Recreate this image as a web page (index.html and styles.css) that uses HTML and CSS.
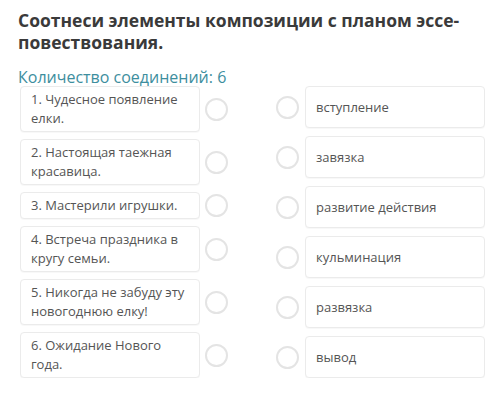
FILE: index.html
```html
<!DOCTYPE html>
<html lang="ru">
<head>
    <meta charset="UTF-8">
    <title>Соотнеси элементы</title>
    <link rel="stylesheet" href="styles.css">
</head>
<body>

<div class="task">
    <h1>Соотнеси элементы композиции с планом эссе-<br>повествования.</h1>
    <p class="count">Количество соединений: 6</p>

    <div class="match">
        <div class="column left">
            <div class="row"><div class="card">1. Чудесное появление елки.</div><span class="dot"></span></div>
            <div class="row"><div class="card">2. Настоящая таежная красавица.</div><span class="dot"></span></div>
            <div class="row"><div class="card">3. Мастерили игрушки.</div><span class="dot"></span></div>
            <div class="row"><div class="card">4. Встреча праздника в кругу семьи.</div><span class="dot"></span></div>
            <div class="row"><div class="card">5. Никогда не забуду эту новогоднюю елку!</div><span class="dot"></span></div>
            <div class="row"><div class="card">6. Ожидание Нового года.</div><span class="dot"></span></div>
        </div>

        <div class="column right">
            <div class="row"><span class="dot"></span><div class="card">вступление</div></div>
            <div class="row"><span class="dot"></span><div class="card">завязка</div></div>
            <div class="row"><span class="dot"></span><div class="card">развитие действия</div></div>
            <div class="row"><span class="dot"></span><div class="card">кульминация</div></div>
            <div class="row"><span class="dot"></span><div class="card">развязка</div></div>
            <div class="row"><span class="dot"></span><div class="card">вывод</div></div>
        </div>
    </div>
</div>

</body>
</html>
```

FILE: styles.css
```css
body {
    font-family: "Open Sans", Arial, sans-serif;
    background: #fff;
    margin: 0;
}

.task {
    padding: 9px 18px 0 18px;
}

h1 {
    font-size: 17.5px;
    font-weight: 700;
    line-height: 22px;
    color: #3a3a3a;
    margin: 0;
    white-space: nowrap;
}

.count {
    font-size: 16px;
    line-height: 22px;
    color: #3d8e9e;
    margin: 13px 0 0 0;
}

.match {
    display: flex;
    margin-top: -2px;
}

.column {
    display: flex;
    flex-direction: column;
}

.left {
    width: 209px;
    padding-left: 2px;
    gap: 7px;
}

.right {
    margin-left: 48px;
    gap: 8px;
}

.row {
    display: flex;
    align-items: center;
}

.card {
    border: 1px solid #ebebeb;
    border-radius: 4px;
    box-shadow: 0 1px 1px rgba(0, 0, 0, 0.03);
    color: #555;
    font-size: 13px;
    line-height: 19px;
    background: #fff;
}

.left .card {
    width: 158px;
    padding: 3px 10px;
}

.right .card {
    width: 168px;
    height: 40px;
    padding: 0 0 0 10px;
    display: flex;
    align-items: center;
}

.dot {
    width: 19px;
    height: 19px;
    border: 2px solid #e4e4e4;
    border-radius: 50%;
    flex-shrink: 0;
}

.left .dot {
    margin-left: 5px;
}

.right .dot {
    margin-right: 6px;
}
```
